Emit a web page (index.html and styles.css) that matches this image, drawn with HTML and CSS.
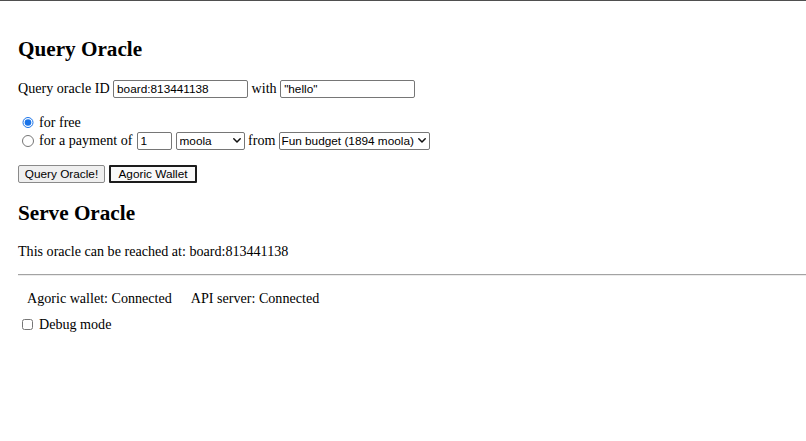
FILE: index.html
```html
<!DOCTYPE html>
<html lang="en">
<head>
<meta charset="utf-8">
<title>Oracle</title>
<link rel="stylesheet" href="styles.css">
</head>
<body>
<div class="app">
  <h2 class="title title-query">Query Oracle</h2>
  <div class="row row-id">
    <span class="txt">Query oracle ID</span>
    <input class="field field-id" type="text" value="board:813441138">
    <span class="txt">with</span>
    <input class="field field-id" type="text" value="&quot;hello&quot;">
  </div>
  <div class="radios">
    <label class="row radio-row">
      <input class="radio" type="radio" name="pay" checked>
      <span class="txt">for free</span>
    </label>
    <label class="row radio-row">
      <input class="radio" type="radio" name="pay">
      <span class="txt">for a payment of</span>
      <input class="field field-num" type="text" value="1">
      <span class="sel-wrap sel-brand">
        <select class="sel"><option>moola</option></select>
        <svg class="chev" viewBox="0 0 8 5" width="8" height="5"><path d="M0.8 0.8 L4 4 L7.2 0.8" fill="none" stroke="#111" stroke-width="1.5" stroke-linecap="round" stroke-linejoin="round"/></svg>
      </span>
      <span class="txt">from</span>
      <span class="sel-wrap sel-purse">
        <select class="sel"><option>Fun budget (1894 moola)</option></select>
        <svg class="chev" viewBox="0 0 8 5" width="8" height="5"><path d="M0.8 0.8 L4 4 L7.2 0.8" fill="none" stroke="#111" stroke-width="1.5" stroke-linecap="round" stroke-linejoin="round"/></svg>
      </span>
    </label>
  </div>
  <div class="buttons">
    <button class="btn btn-query" type="button">Query Oracle!</button>
    <button class="btn btn-wallet" type="button">Agoric Wallet</button>
  </div>
  <h2 class="title title-serve">Serve Oracle</h2>
  <p class="reach">This oracle can be reached at: board:813441138</p>
  <hr class="rule">
  <div class="status">
    <span class="status-item">Agoric wallet: Connected</span>
    <span class="status-item">API server: Connected</span>
  </div>
  <label class="row debug-row">
    <input class="check" type="checkbox">
    <span class="txt">Debug mode</span>
  </label>
</div>
</body>
</html>
```
FILE: styles.css
```css
html, body {
  margin: 0;
  padding: 0;
  background: #fff;
}

body {
  font-family: "Liberation Serif", "Times New Roman", serif;
  font-size: 14.1px;
  color: #000;
}

.app {
  border-top: 1px solid #4f4f4f;
  padding: 0 0 0 18px;
}

.title {
  font-size: 21.2px;
  font-weight: bold;
  line-height: 24px;
  margin: 0;
}

.title-query {
  margin-top: 36px;
}

.title-serve {
  margin-top: 18.5px;
}

.txt {
  line-height: 18px;
  white-space: nowrap;
}

.row {
  display: flex;
  align-items: baseline;
  gap: 3.5px;
}

.row-id {
  margin-top: 17.5px;
}

.field {
  box-sizing: border-box;
  height: 18px;
  border: 1px solid #767676;
  border-radius: 2px;
  padding: 0 3px;
  margin: 0;
  font-family: "Liberation Sans", Arial, sans-serif;
  font-size: 11.8px;
  color: #000;
  background: #fff;
}

.field-id {
  width: 135px;
}

.field-num {
  width: 35px;
  margin-left: 0.5px;
  margin-right: 4px;
}

.radios {
  margin-top: 15.8px;
}

.radio-row {
  gap: 0;
}

.radio-row .txt {
  margin-right: 3.5px;
}

.radio {
  align-self: center;
  width: 11.5px;
  height: 11.5px;
  margin: 0 5.5px 0 4px;
  accent-color: #1a73e8;
}

.radio-row .sel-wrap {
  margin-right: 3.5px;
}

.sel-wrap {
  position: relative;
  display: inline-flex;
  align-self: center;
}

.sel {
  appearance: none;
  -webkit-appearance: none;
  box-sizing: border-box;
  height: 18px;
  border: 1px solid #767676;
  border-radius: 2px;
  background: #fff;
  font-family: "Liberation Sans", Arial, sans-serif;
  font-size: 11.8px;
  color: #000;
  margin: 0;
  padding: 0 0 0 2px;
}

.sel-brand .sel {
  width: 69px;
  padding-left: 3px;
}

.sel-purse .sel {
  width: 151px;
  padding-left: 1.5px;
}

.chev {
  position: absolute;
  right: 4px;
  top: 6.5px;
  pointer-events: none;
}

.buttons {
  display: flex;
  gap: 4px;
  margin-top: 14.6px;
}

.btn {
  box-sizing: border-box;
  height: 18px;
  margin: 0;
  padding: 0;
  font-family: "Liberation Sans", Arial, sans-serif;
  font-size: 11.8px;
  color: #000;
  text-align: center;
  line-height: 16px;
}

.btn-query {
  width: 87px;
  background: #efefef;
  border: 1px solid #8a8a8a;
  border-radius: 2px;
}

.btn-wallet {
  width: 88px;
  background: #f9f9f9;
  border: 2px solid #1c1c1c;
  border-radius: 1px;
  line-height: 14px;
}

.reach {
  margin: 16.4px 0 0;
  line-height: 18px;
}

.rule {
  margin: 14px 0 0;
  height: 0;
  border: 0;
  border-top: 1px solid #a3a3a3;
  border-bottom: 1px solid #ececec;
}

.status {
  display: flex;
  margin-top: 13.5px;
  padding-left: 9px;
  line-height: 18px;
}

.status-item + .status-item {
  margin-left: 19px;
}

.debug-row {
  margin-top: 8px;
  gap: 0;
}

.check {
  align-self: center;
  width: 11px;
  height: 11px;
  margin: 0 6px 0 4px;
}
```
